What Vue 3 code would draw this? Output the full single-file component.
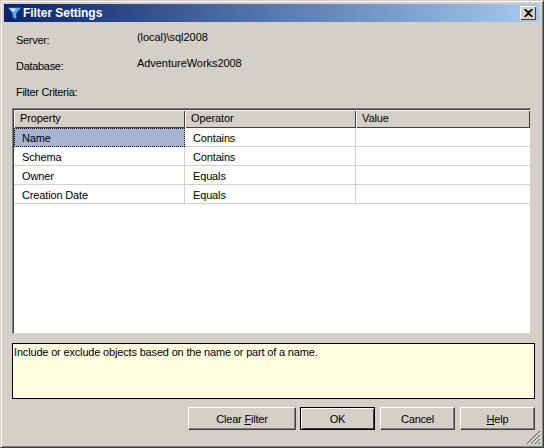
<script setup>
const columns = ['Property', 'Operator', 'Value']
const rows = [
  { id: 1, property: 'Name', operator: 'Contains', selected: true },
  { id: 2, property: 'Schema', operator: 'Contains' },
  { id: 3, property: 'Owner', operator: 'Equals' },
  { id: 4, property: 'Creation Date', operator: 'Equals' }
]
</script>

<template>
  <div class="window">
    <div class="titlebar">
      <svg class="funnel" width="15" height="13" viewBox="0 0 15 13">
        <path d="M.5 .5H14.500L9.500 6.500V12.500L5.500 10.500V6.500Z" fill="#5aa5ee" stroke="#123a90" stroke-width=".7"/>
        <path d="M2.500 1.500H9L6.500 5Z" fill="#d8ecfd"/>
      </svg>
      <span class="title">Filter Settings</span>
      <button class="close" aria-label="Close">
        <svg width="9" height="8" viewBox="0 0 9 8"><path d="M.5 0 4.500 3.300 8.500 0M.5 8 4.500 4.700 8.500 8M1 .5 8 7.500M8 .5 1 7.500" fill="none" stroke="#000" stroke-width="1.500"/></svg>
      </button>
    </div>
    <div class="body">
      <div class="info">
        <div class="labels">
          <span>Server:</span>
          <span>Database:</span>
          <span>Filter Criteria:</span>
        </div>
        <div class="values">
          <span>(local)\sql2008</span>
          <span>AdventureWorks2008</span>
        </div>
      </div>
      <div class="grid">
        <div class="row head">
          <div v-for="c in columns" :key="c" class="hcell">{{ c }}</div>
        </div>
        <div v-for="r in rows" :key="r.id" class="row" :class="{ selected: r.selected }">
          <div class="cell name">{{ r.property }}</div>
          <div class="cell">{{ r.operator }}</div>
          <div class="cell"></div>
        </div>
      </div>
      <div class="note">Include or exclude objects based on the name or part of a name.</div>
      <div class="actions">
        <button class="btn wide">Clear <u>F</u>ilter</button>
        <button class="btn default">OK</button>
        <button class="btn">Cancel</button>
        <button class="btn"><u>H</u>elp</button>
      </div>
    </div>
    <svg class="grip" width="15" height="15" viewBox="0 0 15 15">
      <path d="M14 1 1 14M14 5 5 14M14 9 9 14M14 12.500 12.500 14" stroke="#6f6f6f" stroke-width="1.100" fill="none"/>
      <path d="M14 2.500 2.500 14M14 6.500 6.500 14M14 10.500 10.500 14" stroke="#fff" stroke-width="1" fill="none"/>
    </svg>
  </div>
</template>

<style>
html, body { margin: 0; background: #d4d0c8; }
</style>

<style scoped>
.window {
  position: relative;
  box-sizing: border-box;
  width: 544px;
  height: 448px;
  display: flex;
  flex-direction: column;
  background: #d4d0c8;
  border: 1px solid;
  border-color: #d4d0c8 #404040 #404040 #d4d0c8;
  box-shadow: inset 1px 1px 0 #fff, inset -1px -1px 0 #808080;
  font-family: "Liberation Sans", Arial, sans-serif;
  font-size: 11px;
  color: #000;
  padding: 3px 4px 4px 3px;
}
.titlebar {
  flex: none;
  height: 18px;
  display: flex;
  align-items: center;
  padding: 0 3px 0 3px;
  background: linear-gradient(90deg, #0a246a, #a6caf0);
}
.funnel { flex: none; }
.title {
  flex: 1;
  margin-left: 1px;
  font-size: 12px;
  font-weight: 700;
  letter-spacing: -0.05px;
  color: #fff;
}
.close {
  width: 16px;
  height: 14px;
  padding: 0;
  display: flex;
  align-items: center;
  justify-content: center;
  background: #d4d0c8;
  border: 0;
  box-shadow: inset 1px 1px 0 #fff, inset -1px -1px 0 #404040;
}
.body {
  flex: 1;
  display: flex;
  flex-direction: column;
  padding: 0 4px 0 8px;
}
.info {
  height: 86px;
  display: flex;
}
.labels {
  width: 125px;
  padding: 12px 0 0 4px;
  box-sizing: border-box;
  display: flex;
  flex-direction: column;
  gap: 13px;
  line-height: 13px;
  letter-spacing: -0.3px;
}
.values {
  padding-top: 9px;
  display: flex;
  flex-direction: column;
  gap: 13px;
  line-height: 13px;
  letter-spacing: -0.05px;
}
.grid {
  box-sizing: border-box;
  width: 519px;
  height: 226px;
  background: #fff;
  border: 1px solid;
  border-color: #808080 #d4d0c8 #d4d0c8 #808080;
  box-shadow: inset 1px 1px 0 #404040;
  padding: 1px 0 0 1px;
}
.row {
  display: grid;
  grid-template-columns: 171px 171px 1fr;
  height: 19px;
  box-sizing: border-box;
  border-bottom: 1px solid #d4d0c8;
}
.head {
  height: 18px;
  border-bottom: 0;
  background: #d4d0c8;
}
.hcell {
  box-sizing: border-box;
  padding-left: 6px;
  line-height: 17px;
  letter-spacing: -0.1px;
  box-shadow: inset 1px 1px 0 #fff, inset -1px -1px 0 #404040;
}
.cell {
  box-sizing: border-box;
  padding: 1px 0 0 8px;
  line-height: 18px;
  letter-spacing: -0.15px;
  border-right: 1px solid #d4d0c8;
}
.cell:last-child { border-right: 0; }
.selected .name {
  background: #aab4d0;
  outline: 1px dotted #000;
  outline-offset: -1px;
}
.note {
  box-sizing: border-box;
  width: 523px;
  height: 56px;
  margin-top: 9px;
  padding: 2px 1px;
  line-height: 13px;
  letter-spacing: -0.17px;
  background: #ffffe1;
  border: 1px solid #000;
}
.actions {
  display: flex;
  justify-content: flex-end;
  gap: 5px;
  margin-top: 8px;
}
.btn {
  box-sizing: border-box;
  width: 75px;
  height: 23px;
  padding: 0;
  font: inherit;
  letter-spacing: -0.2px;
  color: #000;
  background: #d4d0c8;
  border: 1px solid;
  border-color: #fff #404040 #404040 #fff;
  box-shadow: inset -1px -1px 0 #808080;
}
.wide { width: 108px; margin-right: -1px; }
.default {
  border: 1px solid #000;
  box-shadow: inset 1px 1px 0 #fff, inset -1px -1px 0 #404040;
}
.grip {
  position: absolute;
  right: 2px;
  bottom: 2px;
}
</style>
